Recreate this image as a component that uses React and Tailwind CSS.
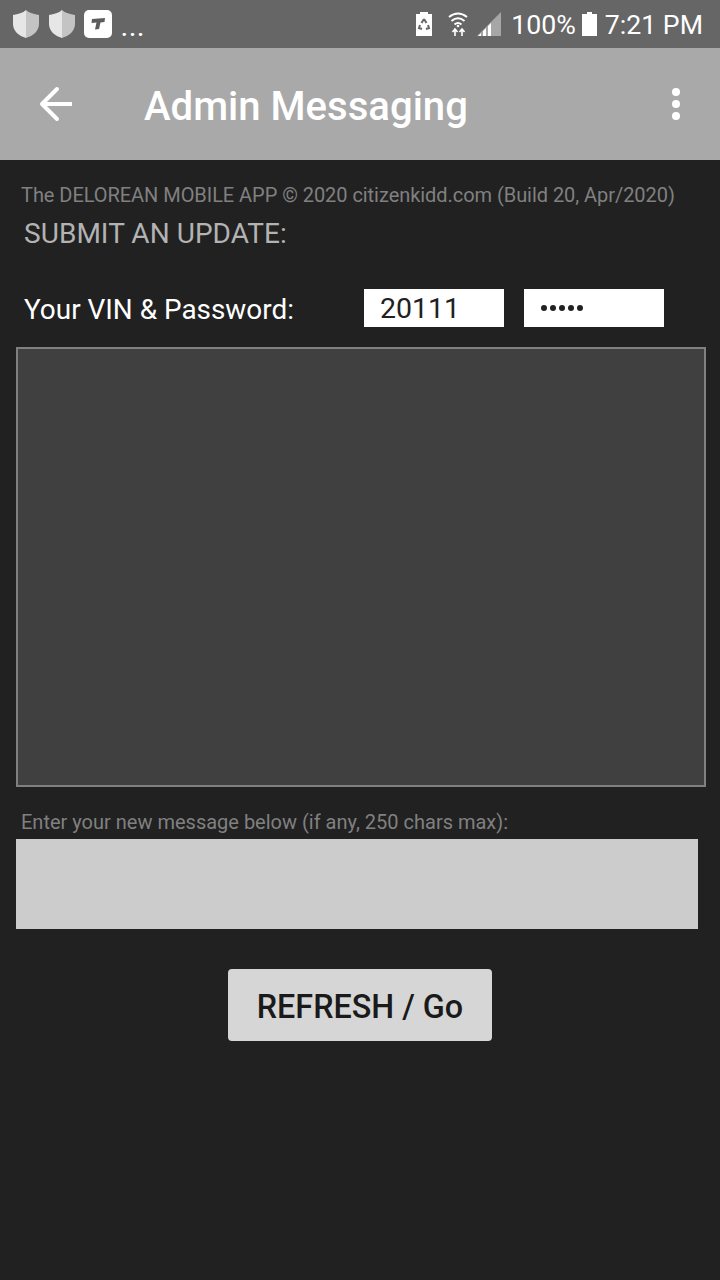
import React from 'react';

const roboto = { fontFamily: 'Roboto, sans-serif' };

const Shield = () => (
  <svg width="26" height="28" viewBox="0 0 26 28">
    <path d="M13 0 C10 3 5 4 0 5 L0 14 C0 21 6 26 13 28 Z" fill="#e6e6e6" />
    <path d="M13 0 C16 3 21 4 26 5 L26 14 C26 21 20 26 13 28 Z" fill="#c4c4c4" />
  </svg>
);

const StatusBar = () => (
  <div className="flex h-12 items-center bg-[#666666] pl-[13px] pr-[17px] text-white">
    <Shield />
    <div className="ml-[10px]">
      <Shield />
    </div>
    <div className="ml-[9px] flex h-[28px] w-[28px] items-center justify-center rounded-[5px] bg-white">
      <svg width="16" height="14" viewBox="0 0 16 14">
        <path d="M2 2 L15 1 L14.5 5 L10.5 5.5 L9 12 L5 12.5 L6.5 5.5 L1.5 6 Z" fill="#5c5c5c" />
      </svg>
    </div>
    <span className="ml-[9px] mt-[8px] text-[24px] font-medium leading-none tracking-[1.5px]">...</span>
    <div className="ml-auto flex items-center">
      <svg width="16" height="24" viewBox="0 0 16 24">
        <path d="M4 0 H12 V2 H16 V24 H0 V2 H4 Z" fill="#fff" />
        <path
          d="M8 7 L5.5 11 M8 7 L10.5 11 M4 13 L3 16 L6 17 M12 13 L13 16 L10 17"
          fill="none"
          stroke="#666"
          strokeWidth="2"
        />
      </svg>
      <svg className="ml-[16px]" width="20" height="24" viewBox="0 0 20 24" fill="none" stroke="#fff" strokeWidth="2">
        <path d="M1 5 Q10 -2 19 5" />
        <path d="M3.5 9 Q10 3.5 16.5 9" />
        <path d="M6.5 12.5 Q10 9.5 13.5 12.5" />
        <circle cx="10" cy="14" r="1.3" fill="#fff" stroke="none" />
        <path d="M7 17 V24 M14 24 V17 M4.5 20 L7 17 L9.5 20 M11.5 20 L14 17 L16.5 20" strokeWidth="1.6" />
      </svg>
      <svg className="ml-[9px]" width="24" height="24" viewBox="0 0 24 24">
        <path d="M24 0 V24 H0 Z" fill="#a6a6a6" />
        <path d="M1 24 L4 21 V24 Z M6 24 V19 L9 16 V24 Z M11 24 V14 L14 11 V24 Z" fill="#fff" />
      </svg>
      <span className="ml-[10px] mt-[2px] text-[26.7px] leading-none">100%</span>
      <svg className="ml-[6px]" width="15" height="24" viewBox="0 0 15 24">
        <path d="M5 0 H10 V2 H15 V24 H0 V2 H5 Z" fill="#fff" />
      </svg>
      <span className="ml-[8px] mt-[2px] text-[26.7px] leading-none">7:21 PM</span>
    </div>
  </div>
);

const AppBar = () => (
  <div className="flex h-[112px] items-center bg-[#a9a9a9] text-white">
    <div className="flex w-[144px] pl-[39px]">
      <svg width="36" height="36" viewBox="0 0 36 36" fill="none" stroke="#fff" strokeWidth="4" strokeLinecap="round">
        <path d="M33 18 H5" strokeLinecap="butt" />
        <path d="M18 3 L3 18 L18 33" strokeLinejoin="round" />
      </svg>
    </div>
    <h1 className="mt-[6px] text-[40.1px] font-medium leading-none">Admin Messaging</h1>
    <div className="ml-auto flex flex-col gap-[4px] pr-[40px]">
      <span className="h-[8px] w-[8px] rounded-full bg-white" />
      <span className="h-[8px] w-[8px] rounded-full bg-white" />
      <span className="h-[8px] w-[8px] rounded-full bg-white" />
    </div>
  </div>
);

export default function App() {
  return (
    <div className="flex min-h-[1280px] flex-col bg-[#212121]" style={roboto}>
      <StatusBar />
      <AppBar />
      <div className="pl-[16px]">
        <p className="mt-[22px] pl-[5px] text-[20px] leading-[26px] tracking-[-0.05px] text-[#808080]">
          The DELOREAN MOBILE APP © 2020 citizenkidd.com (Build 20, Apr/2020)
        </p>
        <p className="mt-[10px] pl-[8px] text-[28px] leading-[32px] tracking-[0.05px] text-[#b3b3b3]">SUBMIT AN UPDATE:</p>
        <div className="mt-[39px] flex h-[38px] items-center">
          <span className="mt-[4px] w-[348px] pl-[8px] text-[27.9px] leading-[38px] text-white">Your VIN &amp; Password:</span>
          <div className="flex h-[38px] w-[140px] items-center bg-white pl-[16px] pt-[2px] text-[28.5px] text-[#212121]">20111</div>
          <div className="ml-[20px] flex h-[38px] w-[140px] items-center gap-[3px] bg-white pl-[17px]">
            <span className="h-[6px] w-[6px] rounded-full bg-[#212121]" />
            <span className="h-[6px] w-[6px] rounded-full bg-[#212121]" />
            <span className="h-[6px] w-[6px] rounded-full bg-[#212121]" />
            <span className="h-[6px] w-[6px] rounded-full bg-[#212121]" />
            <span className="h-[6px] w-[6px] rounded-full bg-[#212121]" />
          </div>
        </div>
        <div className="mt-[20px] h-[440px] w-[690px] border-2 border-[#808080] bg-[#404040]" />
        <p className="mt-[22px] pl-[5px] text-[20px] leading-[26px] text-[#808080]">
          Enter your new message below (if any, 250 chars max):
        </p>
        <div className="mt-[4px] h-[90px] w-[682px] bg-[#cccccc]" />
      </div>
      <div className="mt-[40px] flex justify-center">
        <button className="h-[72px] w-[264px] rounded-[4px] bg-[#d6d6d6] pt-[4px] text-[32.3px] font-medium text-[#1a1a1a]">
          REFRESH / Go
        </button>
      </div>
    </div>
  );
}
